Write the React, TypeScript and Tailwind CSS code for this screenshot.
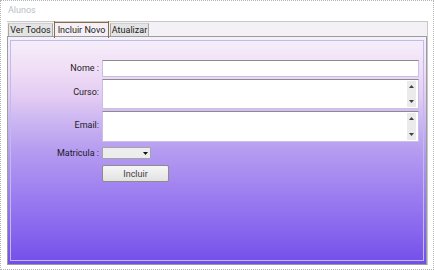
import React from "react";

function ScrollBar() {
  return (
    <div className="absolute right-[2px] top-[1px] bottom-[1px] w-[9px] bg-[#ebebeb] flex flex-col items-center justify-between py-[4px]">
      <svg width="5" height="3" viewBox="0 0 5 3"><path d="M2.5 0L5 3H0z" fill="#404040" /></svg>
      <svg width="5" height="3" viewBox="0 0 5 3"><path d="M0 0H5L2.5 3z" fill="#404040" /></svg>
    </div>
  );
}

function Row({ label, h, mt, children, labelClass = "" }: { label: string; h: string; mt: string; children: React.ReactNode; labelClass?: string }) {
  return (
    <div className={`flex items-center ${h} ${mt}`}>
      <div className={`w-[88px] text-right leading-[11px] ${labelClass}`}>{label}</div>
      <div className="ml-[3px] h-full flex items-center">{children}</div>
    </div>
  );
}

export default function App() {
  return (
    <div className="w-[434px] h-[270px] bg-white border border-dotted border-[#b4b4b4] pl-[6px] pt-[2px] font-['Roboto',sans-serif] text-[9px] text-[#1c1c1c]">
      <div className="h-[18px] leading-[14px] text-[9px] text-[#b8c0c8] pl-[1px]">Alunos</div>
      <div className="w-[421px] h-[244px] border-t border-r border-[#c8c8c8] flex flex-col bg-[#f3f1f6]">
        <div className="h-[14px] flex items-end pl-[1px] gap-[1px] shrink-0">
          <div className="w-[45px] h-[13px] border border-b-0 border-t-[#d0d0d0] border-[#a8a8a8] bg-[#e4e4e4] flex items-center justify-center leading-[12px]">Ver Todos</div>
          <div className="relative w-[55px] h-[14px] border border-b-0 border-[#8a6a48] bg-[#f4f0f6] flex items-center justify-center leading-[12px]">
            Incluir Novo
            <div className="absolute left-[-1px] top-[-2px] w-[1px] h-[2px] bg-[#8a6a48]" />
            <div className="absolute right-[-1px] top-[-2px] w-[1px] h-[2px] bg-[#8a6a48]" />
            <div className="absolute left-[-1px] bottom-[-2px] w-[1px] h-[2px] bg-[#8a6a48]" />
            <div className="absolute right-[-1px] bottom-[-2px] w-[1px] h-[2px] bg-[#8a6a48]" />
          </div>
          <div className="w-[39px] h-[13px] border border-b-0 border-t-[#d0d0d0] border-[#a8a8a8] bg-[#e4e4e4] flex items-center justify-center leading-[12px]">Atualizar</div>
        </div>
        <div className="flex-1 w-[420px] border border-[#9c9c9c] bg-[linear-gradient(180deg,#f6f0fb_0%,#f0def6_14%,#e4ccf3_26%,#cdb8f2_36%,#b69cf0_50%,#9e80f0_68%,#8a68ee_84%,#744eea_100%)] pt-[3px] px-[2px] pb-[3px] flex">
          <div className="flex-1 border border-[#bcbcee] pt-[19px] flex flex-col">
            <Row label="Nome :" h="h-[17px]" mt="mt-0">
              <div className="w-[317px] h-[17px] bg-white border border-[#c8c0e4] border-t-[#8c8c8c]" />
            </Row>
            <Row label="Curso:" h="h-[30px]" mt="mt-[2px]" labelClass="-mt-[4px]">
              <div className="relative w-[317px] h-[30px] bg-white border border-[#c8c0e4] border-t-[#8c8c8c]">
                <ScrollBar />
              </div>
            </Row>
            <Row label="Email:" h="h-[31px]" mt="mt-[2px]" labelClass="-mt-[2px]">
              <div className="relative w-[317px] h-[31px] bg-white border border-[#c8c0e4] border-t-[#8c8c8c]">
                <ScrollBar />
              </div>
            </Row>
            <Row label="Matricula :" h="h-[12px]" mt="mt-[5px]">
              <div className="w-[49px] h-[12px] bg-[#ededed] border border-[#a4a4a4] rounded-[1px] flex items-center justify-end pr-[2px]">
                <svg width="5" height="3" viewBox="0 0 5 3"><path d="M0 0H5L2.5 3z" fill="#111" /></svg>
              </div>
            </Row>
            <div className="flex mt-[6px]">
              <div className="w-[91px]" />
              <div className="w-[67px] h-[17px] border border-[#8c8c8c] rounded-[2px] bg-[linear-gradient(180deg,#f6f6f6,#e2e2e2)] flex items-center justify-center text-[#404040] leading-[12px]">Incluir</div>
            </div>
          </div>
        </div>
      </div>
    </div>
  );
}
